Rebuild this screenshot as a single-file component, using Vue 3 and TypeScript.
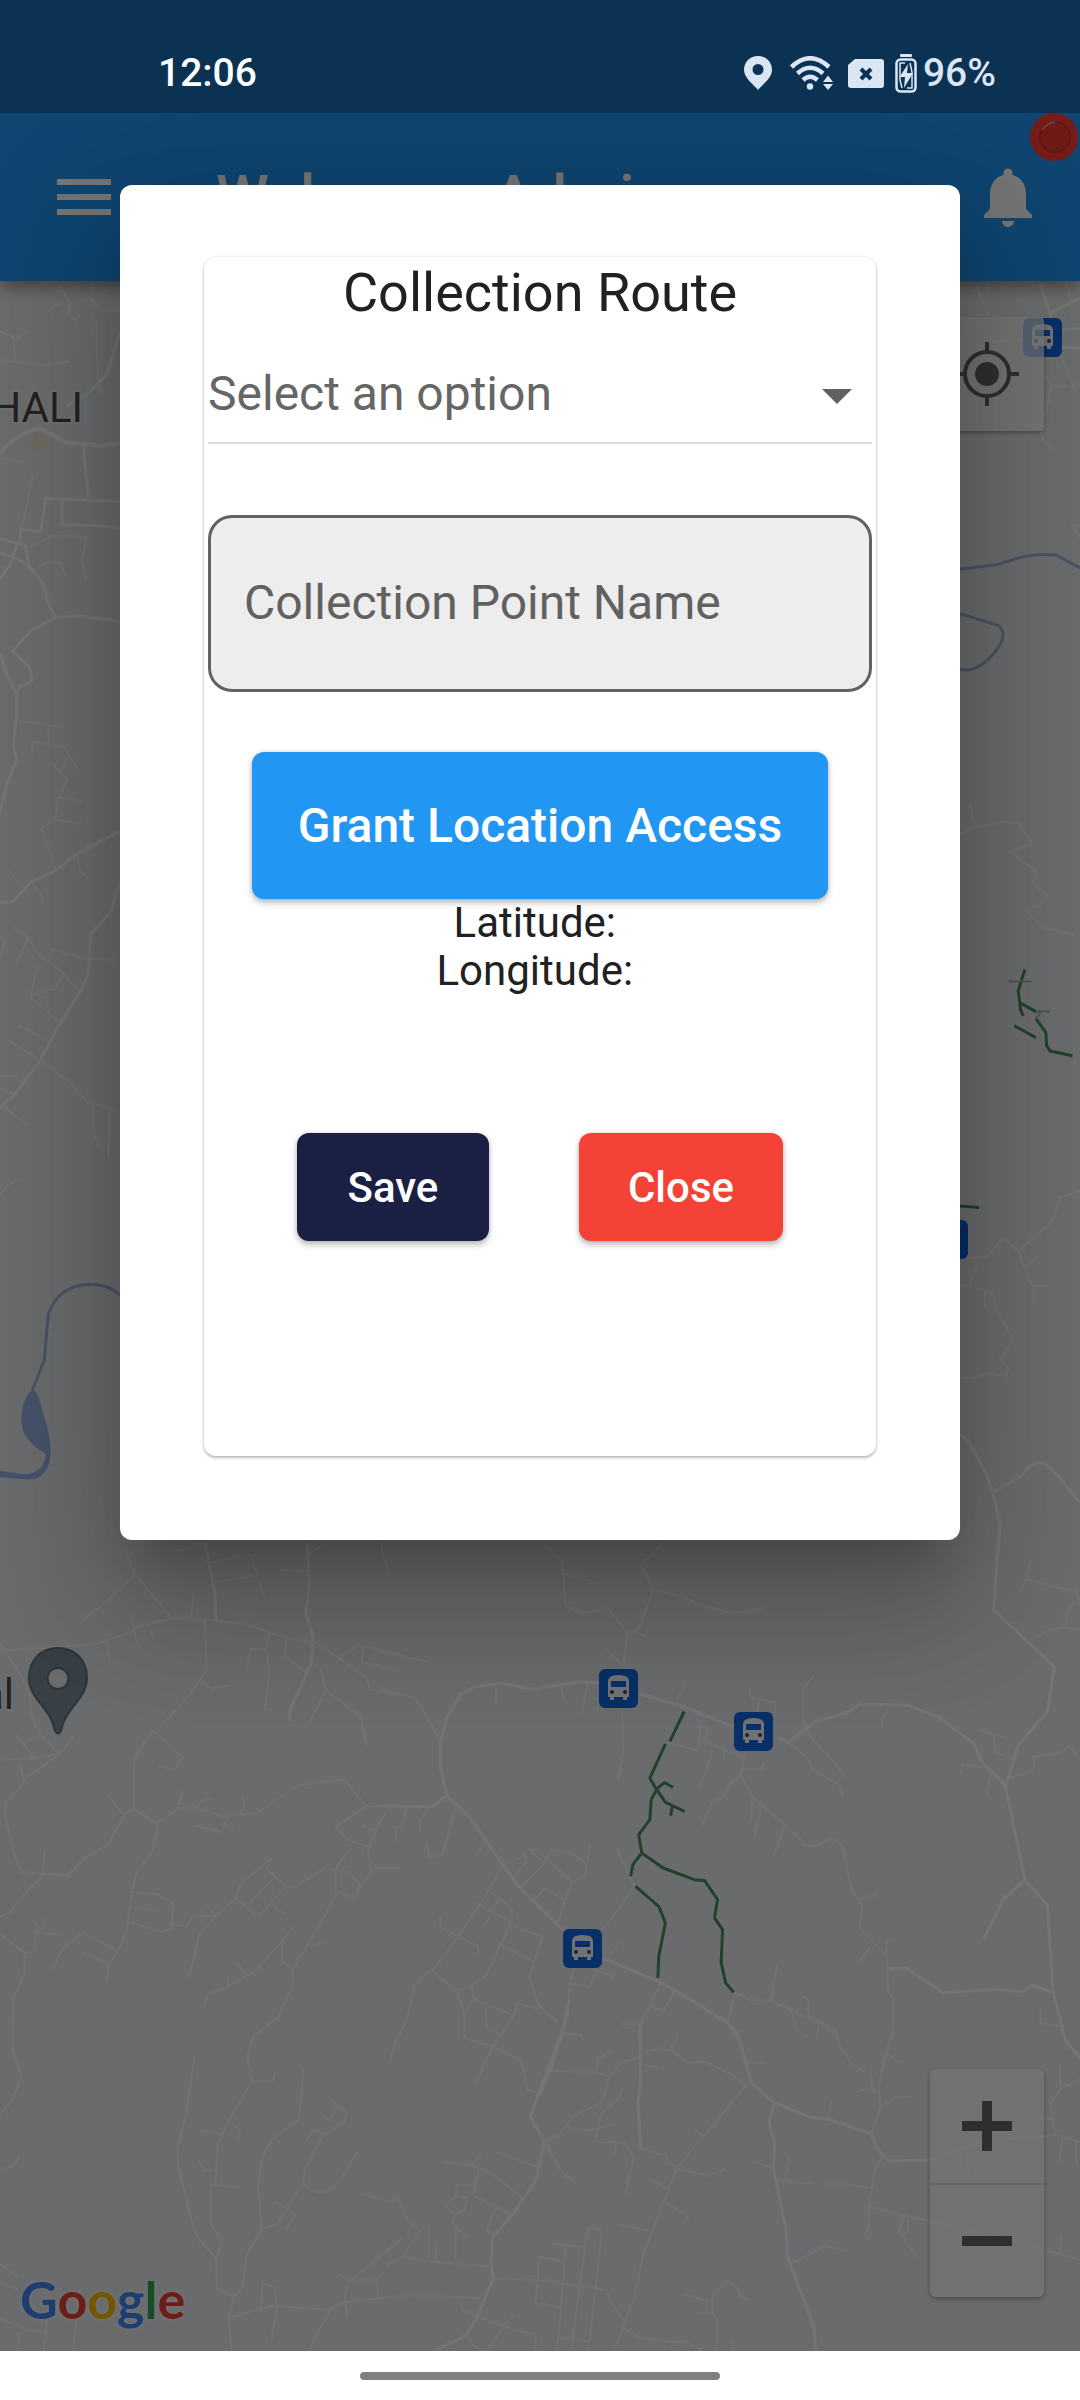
<script setup lang="ts">
import { ref } from 'vue'

interface Tile {
  x: number
  y: number
  sx: number
  sy: number
  roads: string[]
  lanes: string[]
}

const route = ref('')
const pointName = ref('')

const tiles: Tile[] = [
  {
    x: 700, y: 0, sx: 3, sy: 3,
    roads: [
      'M1020 850L1050 940L1140 895M1050 940L1055 960M1085 990L1140 985M1085 1040L1140 1045',
    ],
    lanes: [
      'M830 860L865 940M1100 850L1112 905M780 950L830 945L1020 955M870 1025L970 1020M1080 1060L1125 1170M1100 1160L1055 1155L1035 1250M1035 1130L1060 1155M1020 1295L1030 1320L1050 1335L1050 1350',
    ],
  },
  {
    x: 0, y: 280, sx: 3, sy: 1.742,
    roads: [
      'M0 300Q60 262 120 258L200 282L300 288L360 284',
      'M0 302Q60 264 120 260L200 284L300 290L360 286',
      'M250 290L265 378M60 460L62 434L122 438L138 380L360 386M186 382L186 426L300 428L360 432',
      'M360 595L240 585L165 588L90 612L38 646L90 676L95 700L60 708L50 720L50 760L40 810L50 835L20 880L0 925',
      'M0 450L75 462L90 500L130 530L145 565L165 586M0 475L60 488L100 505',
      'M360 960L230 1000L165 1030L95 1048L40 1082L0 1085',
      'M360 1048L332 1100L272 1140L265 1210L240 1240L170 1305L120 1360L45 1418L0 1442',
      'M360 90L320 165L260 200L200 220M55 455L30 495L0 520M0 650L20 686L50 722',
    ],
    lanes: [
      'M98 340L70 420L55 455M80 468L160 445L260 448L245 490L260 525M115 500L150 490L180 492L198 515',
      'M50 766L192 780M146 780L146 805M95 828L95 805L190 812L232 850M210 828L182 855M158 842L200 870L175 905L165 940L125 955L168 1030M180 902L248 908M165 940L200 943L247 947',
      'M25 1028L70 1058M95 1048L128 1075L122 1085M230 1000L240 1030L262 1040',
      'M40 1127L85 1145L115 1175L175 1200L240 1240M145 1185L158 1165L250 1182L360 1184M85 1145L48 1192M112 1195L92 1245L165 1235L185 1212M92 1250L175 1292M18 1150L0 1180',
      'M55 1298L145 1325M20 1322L120 1360L205 1395L260 1430L360 1450M280 1435L280 1480L300 1515M328 1450L325 1530M0 1385L45 1388L68 1400M0 1408L45 1420M10 1440L80 1472',
      'M0 90L40 100L45 140M45 105L80 90M0 140L130 148L210 142M180 10L210 40L205 60L225 70L240 60M150 50L190 40M290 70L290 130L300 200M265 30L300 50L360 55M0 310L70 318',
    ],
  },
  {
    x: 950, y: 450, sx: 3, sy: 1.425,
    roads: [
      'M30 1402L60 1415L110 1460L128 1485L150 1530L145 1568M128 1485L215 1462Q260 1425 320 1460L390 1500',
    ],
    lanes: [
      'M30 548L75 537L165 530L205 532L245 560L180 572L262 602L250 618L292 635L270 648L225 655L280 680L372 691M60 505L72 535',
      'M390 1055L330 1065L305 1100L205 1142L160 1122L110 1150L40 1152M205 1142L245 1190L292 1192M250 1190L250 1215M225 1165L268 1148',
      'M30 1190L55 1190L85 1160M55 1190L130 1202L140 1225L190 1268L150 1295L178 1310L165 1320L110 1315L75 1322L30 1322M105 1200L105 1220M390 125L365 105L390 110',
    ],
  },
  {
    x: 0, y: 1180, sx: 3, sy: 2.613,
    roads: [
      'M615 950L645 1080L648 1155M922 950L928 1060L918 1135L938 1190L935 1260L870 1385L868 1415',
    ],
    lanes: [
      'M0 40Q20 5 60 0M375 970L405 1030L510 1140M405 1035L300 1115L240 1155M0 1230L290 1212L380 1185L420 1165L520 1145L620 1150L740 1160L850 1195L950 1210L1100 1300L1110 1330L1200 1345',
      'M525 972L600 950M632 1000L720 982M645 1050L765 1035M752 980L795 1095M582 1080L573 1145M840 1020L925 1022M920 980L968 955M1145 950L1150 985L1170 1030',
      'M615 1150L620 1280L570 1345L490 1420M605 1308L635 1330L682 1320M392 1140L415 1220M445 1160L462 1200M318 1205L332 1255M808 1182L798 1230L808 1280L795 1385L815 1387M738 1282L755 1225L798 1227M860 1190L855 1245L925 1292M940 1262L962 1280L978 1335L930 1415M978 1335L1080 1400L1100 1478M1020 1245L1075 1215L1200 1240M1090 1220L1085 1260L1200 1280M1085 1260L1070 1280',
      'M402 1520L435 1465L460 1440L547 1508L525 1542L475 1530M0 1210L60 1290L90 1350L95 1400L118 1445L180 1500L220 1455M0 1515L100 1510L180 1500M50 1450L100 1510M70 1470L118 1450M60 1520L70 1568L180 1500',
    ],
  },
  {
    x: 380, y: 1540, sx: 2.24, sy: 3,
    roads: [
      'M580 460L680 500L790 560M890 590L915 607L975 545L1050 515L1075 492L1180 495L1250 530L1330 610L1350 670L1400 735L1445 1020L1495 1095L1508 1355L1535 1500',
      'M135 610L150 530L180 465L210 440L275 430L340 448L450 425L490 428',
      'M135 600L135 680L150 768L200 830L275 975L315 1045L410 1170M500 1255L625 1325L660 1350L780 1450L805 1500M0 797L115 800L150 768',
      'M1385 0L1375 210L1510 380L1495 515L1430 615L1402 735M1445 1020L1395 1080L1352 1200',
      'M1140 1285L1180 1285L1262 1358L1380 1348L1440 1355L1460 1335L1508 1358',
    ],
    lanes: [
      'M635 10L585 75L612 150L580 265L555 280L545 380M612 150L680 170L710 192L790 220L858 205M560 270L598 290M540 370L502 325M370 20L410 70L415 195L450 220L510 205L555 280M415 100L490 130',
      'M542 510L545 640L532 722M0 335L108 365M0 385L48 388M0 445L80 475L130 590M260 440L260 490M405 435L410 480M465 430L452 525M490 490L485 515',
      'M682 430L665 490M828 445L830 470L885 488L885 520M850 480L845 515M972 405L948 445L948 545L965 590L1020 670L1042 712M915 607L955 650L970 690L1030 735L1038 775',
      'M720 540L712 630L645 610M712 560L735 565L728 605L815 655M745 630L740 655L715 745M770 630L770 655M818 640L808 705L835 770L945 900L950 917L980 917L1015 893L1035 915L1055 1040L1080 1100L1075 1165L1135 1250L1138 1350L1150 1380L1148 1500M808 705L785 730L768 772L745 785L720 858M815 688L855 688L860 668M835 770L830 845M855 795L838 898M908 850L882 945',
      'M1145 492L1125 535L1125 565M1345 570L1405 595M1375 580L1378 635L1415 655M1300 705L1305 675L1350 682M1368 700L1358 770M1410 715L1465 690L1465 650L1520 640L1545 618L1568 655M1460 300L1490 275L1530 262L1568 268M1535 262L1545 195L1568 190M1455 65L1448 118L1555 155M1448 118L1435 155M1555 130L1568 190',
      'M1075 1075L1115 1065M1072 1268L1098 1220M1133 1250L1135 1200L1155 1200M1480 1405L1480 1450L1530 1460',
      'M275 975L245 1050L175 1190L120 1290M275 975L325 945L330 965L300 1010M315 1040L370 970L335 930L350 928L430 1025L460 1005L470 915M430 1025L415 1080L370 1045L345 1080M415 1080L400 1145M370 965L385 930L430 940L465 975',
      'M240 1050L295 1105L295 1145L215 1090M235 1155L265 1080M295 1145L270 1215L235 1310L200 1340M285 1150L365 1190L345 1265L270 1215M345 1265L335 1310L355 1395L400 1450M135 1130L135 1160L220 1220L220 1245M115 1290L170 1355L190 1415L210 1380L205 1340L170 1355',
      'M530 925L570 1040L510 1150L495 1168M435 1285L425 1330L420 1440L400 1500M425 1330L470 1340L485 1290L520 1310L530 1290M515 1240L540 1205M630 1325L585 1450L583 1500M660 1350L635 1412L605 1400M540 1452L585 1453',
      'M795 1358L830 1380L875 1382L985 1450L1025 1490M890 1275L875 1380M795 1358L780 1445M945 1368L960 1380L960 1425',
      'M60 800L50 860L35 862L35 905M110 800L90 840L90 875M172 795L140 945L110 950L105 905M240 900L215 945',
    ],
  },
  {
    x: 0, y: 1750, sx: 2.8, sy: 2.412,
    roads: [
      'M1568 690L1510 825L1485 885L1525 945L1500 1040L1435 1120L1380 1175L1375 1240L1382 1275L1335 1370L1305 1412L1215 1450M1525 945L1568 1010',
    ],
    lanes: [
      'M15 130L75 70M15 130L15 160L40 250L60 295L190 302L235 262L300 230L350 155L375 142L440 178L440 205L425 245L380 300L365 370L355 440L330 485L305 515L300 560M0 402L30 390L75 340L125 298M125 240L120 295M375 142L375 20L390 0M300 105L345 155',
      'M440 178L500 140L550 140L625 160L720 152L835 85L965 72L1025 135L1064 135M500 135L512 98M550 138L565 122L590 118M680 110L685 130L672 158M545 182L620 198L640 160M638 180L655 195',
      'M365 342L440 348L485 370L480 430L455 440L365 415M370 378L435 387M480 420L520 425L540 400L605 400M570 370L605 400L660 358L675 320L760 262M605 400L560 440L535 530L520 550M745 285L800 330L825 330L910 285L975 295L1010 325L990 360L945 340L910 400L820 530L820 570L790 620L780 645L710 690L693 740L705 800L640 895L610 950L603 1045',
      'M660 358L700 385L720 405L800 330M695 375L765 310M765 375L797 397M940 340L940 285L975 245M705 800L765 798L770 780M820 530L790 510L790 460L720 530L640 570L580 590L570 620M790 460L825 425M870 475L905 462M660 510L690 540M635 545L640 568',
      'M545 740L520 880L497 960L500 1010L545 1160L560 1185L605 1225L608 1300L655 1318M670 1055L590 1048L590 1140L622 1190L605 1225M555 990L575 1015L603 1015M560 918L618 925M640 898L672 915L665 945',
      'M850 765L838 890L760 940L735 980L723 1050L733 1155L690 1220L678 1300L655 1318L640 1370L648 1450M733 1155L775 1145L848 1045L855 1010L900 935L965 895L970 875L920 840M848 1045Q900 1090 950 1040L1000 970M855 943L880 915L905 925M898 878L925 895L940 858M768 1088L825 1120L800 1160',
      'M640 1370L760 1340L920 1350L960 1332L1140 1315L1345 1322M930 1345L885 1410L865 1450M735 1280L730 1355M735 1285L770 1295L775 1345L760 1425',
      'M0 445L70 490L68 540L37 600L35 720L60 790L30 850L0 880M145 530L175 480L230 440L330 485M230 487L305 515M70 490L98 485L100 440L165 445M95 415L115 435L130 405M0 1010Q50 1010 52 980',
      'M1010 1068L1090 1090L1115 1080L1140 1135L1175 1160L1130 1220M1085 1242L1130 1222L1210 1235L1375 1245M985 1278L1125 1178M950 1262L975 1280L1055 1278L1060 1325M975 1280L965 1320L973 1368M1055 1278L1070 1262M1200 1145L1200 1225M1225 1190L1218 1228M1275 1230L1275 1150L1308 1175',
      'M1245 995L1320 1002L1365 1015L1420 1050L1465 1080M1320 1002L1350 972M1340 1015L1325 1075L1430 1120M1325 1050L1280 1050L1275 1078L1245 1100L1275 1120L1300 1110L1308 1080L1275 1075M1390 1105L1362 1158L1385 1172M1390 970L1505 1005M1275 1120L1268 1140L1285 1160',
      'M1525 945L1568 930M1382 1275L1568 1280M1510 1222L1500 1335L1568 1345M1510 1222L1568 1230M1290 1322L1295 1350L1410 1390L1500 1412L1500 1450M1305 1412L1330 1440L1365 1450L1410 1390L1440 1362',
      'M1025 135L940 185L970 215L1035 235M1055 195L1030 240L1040 300L1010 325M1015 180L1050 195L1080 150M1040 285L1120 285',
      'M1300 630L1300 695L1380 715L1330 805M1380 715L1440 640M1325 600L1435 640M1360 620L1362 670L1410 690M1440 640L1450 612L1510 625M1380 715L1460 750L1478 820L1508 828M1205 530L1160 570L1140 650L1110 700L1090 755',
      'M0 1240L50 1270M0 1285L50 1300M0 1370L80 1400L130 1405L130 1375M55 1405L50 1450M215 1370L205 1450M130 1405L122 1450',
    ],
  },
  {
    x: 540, y: 1980, sx: 2.904, sy: 3,
    roads: [
      'M545 130L575 160L600 260L615 310L680 368L785 412L840 418L963 462L975 495L995 527L1015 543L1130 540',
      'M680 370L665 430L682 490L678 560L695 655L715 750L718 830L730 860L770 970L795 1040L802 1115',
      'M290 130L292 300L285 370L292 505M85 60L65 155L30 270L0 345M1525 180L1568 235',
    ],
    lanes: [
      'M65 160L120 165L125 182M30 272L160 277L200 290L190 330L175 370L95 410L60 460L15 487L0 560M0 465L15 487L70 585L103 603M165 275L168 235L208 213M200 290L240 245L290 233',
      'M300 218L345 205L380 212L430 248L480 245L560 285L598 318L400 560L300 820L275 950L215 1110M375 212L402 165M300 255L345 263M240 320L230 355L175 405L160 485L245 488L272 532L248 645M80 445L155 450L210 432M220 490L218 515L208 525',
      'M290 505L365 527L372 548L400 565L490 588L537 567M318 598L370 625M357 665L425 705L430 725M232 732L315 753M445 445L475 470',
      'M600 248L650 248M840 415L845 362M617 543L678 565M725 530L712 600M690 598L740 610L790 610M827 612L890 612L960 625M728 850L770 830L830 797L885 812',
      'M1028 140L1005 220L983 320L988 380L963 462M1005 222L1048 248M985 378L1035 352L1080 350M915 338L960 322L975 340M960 280L965 320M995 530L972 570L955 680L955 735L945 765L960 782M960 680L1060 708L1130 722L1400 790L1568 840M1055 710L1042 755L1065 790L1095 832M1070 715L1068 755L1050 765',
      'M730 85L740 145L778 172M780 105L860 152L870 200L910 255L945 275M810 130L803 178',
      'M420 943L497 965M455 1000L500 1000L515 1020L515 1115M500 1000L500 945L545 902L575 925L580 945L600 960M560 1075L562 1115',
      'M0 900L195 930L205 970L245 1020M240 1045L290 1072L385 1087L420 1085L470 1110M385 1087L382 1115M35 793L125 800M75 805L50 1115M138 742L180 750L140 1115M138 742L90 1115M0 830L75 848M0 970L55 980M55 1072L140 1083',
      'M1508 252L1512 325L1568 298M1512 325L1482 370L1497 465L1568 485M1130 540L1300 480L1500 465M1465 415L1490 418M1518 470L1508 550M1558 480L1558 555M1513 770L1510 820M1240 510L1245 600M1305 480L1305 600',
    ],
  },
]

const busStops: [number, number][] = [
  [1023, 318],
  [929, 1220],
  [599, 1669],
  [734, 1712],
  [563, 1929],
]

const logo: [string, string][] = [
  ['G', '#4285f4'],
  ['o', '#ea4335'],
  ['o', '#fbbc05'],
  ['g', '#4285f4'],
  ['l', '#34a853'],
  ['e', '#ea4335'],
]

const tileTransform = (t: Tile) => `translate(${t.x} ${t.y}) scale(${1 / t.sx} ${1 / t.sy})`
</script>

<template>
  <div class="phone">
    <div class="status">
      <span class="clock">12:06</span>
      <div class="status-icons">
        <svg class="pin-icon" viewBox="0 0 28 34" width="28" height="34">
          <path fill-rule="evenodd" d="M14 0C6 0 0 6 0 14C0 22 10 29 14 34C18 29 28 22 28 14C28 6 22 0 14 0ZM14 8A5.500 5.500 0 1 1 14 19A5.500 5.500 0 1 1 14 8Z" />
        </svg>
        <svg class="wifi-icon" viewBox="0 0 44 34" width="44" height="34">
          <g fill="none" stroke="currentColor" stroke-width="4.500">
            <path d="M1.500 11Q20 -6.500 39 11" />
            <path d="M7.500 17.500Q20 6 33 17.500" />
            <path d="M13 24Q20 17.500 27.500 24" />
          </g>
          <circle cx="20" cy="30.500" r="3.200" />
          <path d="M38 19.500L43 26H33ZM33 28H43L38 34Z" />
        </svg>
        <svg class="sim-icon" viewBox="0 0 36 29" width="36" height="29">
          <path d="M7 0H33Q36 0 36 3V26Q36 29 33 29H3Q0 29 0 26V6Z" />
          <path class="cut" d="M13 10L23 20M23 10L13 20" />
        </svg>
        <svg class="battery-icon" viewBox="0 0 22 39" width="22" height="39">
          <rect x="5" y="0" width="12" height="3" rx="1" />
          <g fill="none" stroke="currentColor">
            <rect x="1.500" y="5.500" width="19" height="32" rx="4" stroke-width="2.500" />
            <path d="M10 9H5V26L7 34M12 34H17V18L15 9" stroke-width="1.500" />
          </g>
          <path d="M13 10L4.500 23H10L9 34L18 19H12Z" />
        </svg>
        <span class="percent">96%</span>
      </div>
    </div>

    <div class="stage">
      <header class="app-bar">
        <button class="icon-button" type="button" aria-label="Menu">
          <svg viewBox="0 0 24 24" width="72" height="72"><path d="M3 18h18v-2H3v2zm0-5h18v-2H3v2zm0-7v2h18V6H3z" /></svg>
        </button>
        <h1 class="app-title">Welcome, Admin</h1>
        <button class="icon-button" type="button" aria-label="Notifications">
          <svg viewBox="0 0 24 24" width="72" height="72"><path d="M12 22c1.100 0 2-.9 2-2h-4c0 1.100.9 2 2 2zm6-6v-5c0-3.070-1.640-5.640-4.500-6.320V4c0-.83-.67-1.500-1.500-1.500s-1.500.67-1.500 1.500v.68C7.630 5.360 6 7.920 6 11v5l-2 2v1h16v-1l-2-2z" /></svg>
          <svg class="badge" viewBox="0 0 48 48" width="48" height="48">
            <circle cx="24" cy="24" r="24" fill="#ff3d30" />
            <circle cx="25" cy="24" r="15" fill="#f03a33" stroke="#d32f2f" stroke-width="2" />
            <path d="M12 17Q17 10 25 9" fill="none" stroke="#ff8a80" stroke-width="2" />
          </svg>
        </button>
      </header>

      <main class="map">
        <svg class="map-art" viewBox="0 281 1080 2070" preserveAspectRatio="xMidYMid slice" aria-hidden="true">
          <g v-for="(t, i) in tiles" :key="i" :transform="tileTransform(t)">
            <path v-for="d in t.lanes" :key="d" class="lane" :d="d" />
            <path v-for="d in t.roads" :key="d" class="road" :d="d" />
          </g>
          <g transform="translate(0 1180) scale(0.333 0.383)">
            <path class="river" d="M97 550L133 470L145 350Q175 275 270 272Q325 272 360 300" />
            <path class="lake" d="M97 550Q112 550 118 575L142 645Q156 690 150 735Q135 780 90 782L0 776V760L70 768Q132 768 138 716Q70 680 65 640Q60 600 78 570Q88 550 97 550Z" />
          </g>
          <g transform="translate(950 450) scale(0.333 0.702)">
            <path class="river" d="M30 170L145 163Q245 145 320 150L390 168M30 233L145 250Q175 262 140 285Q80 320 30 312" />
            <path class="trail" d="M225 740L205 770L212 798L220 806M212 788L258 800M258 810L288 830L290 848L300 856L368 863M193 820L258 837M30 1077L88 1079" />
            <path class="trail faint" d="M178 757H245M258 800H300M275 800L258 810" />
          </g>
          <g transform="translate(380 1540) scale(0.446 0.333)">
            <path class="trail" d="M682 515L650 605M640 612L605 715L620 750L608 780L605 840L580 885L587 940L567 975L562 1010M573 1040L625 1100L640 1150L625 1250L623 1315M587 940L635 985L705 1020L728 1023L757 1080L750 1135L768 1170L765 1270L775 1330L793 1358M620 748L638 728L657 743M620 748L640 788L683 815M655 800L652 828" />
          </g>
          <ellipse cx="38" cy="442" rx="10" ry="9" fill="#efe6d2" />
          <g v-for="[x, y] in busStops" :key="y" :transform="`translate(${x} ${y})`">
            <rect width="39" height="39" rx="6" fill="#1268e0" />
            <path fill="#f4f8ff" d="M9 12Q9 6 19.500 6Q30 6 30 12V28H28V31H24V28H15V31H11V28H9Z" />
            <rect x="12" y="12" width="15" height="6" fill="#1268e0" />
            <circle cx="13" cy="23" r="2" fill="#444b5a" />
            <circle cx="26" cy="23" r="2" fill="#444b5a" />
          </g>
          <path fill="#7a8b98" stroke="#65757f" stroke-width="2" fill-rule="evenodd" d="M58 1648C41 1648 29 1660 29 1678C29 1699 51 1708 55 1731Q58 1736 61 1731C65 1708 87 1699 87 1678C87 1660 75 1648 58 1648ZM58 1668A10.500 10.500 0 1 1 58 1689A10.500 10.500 0 1 1 58 1668Z" />
          <text class="place" x="83" y="422" text-anchor="end">HALI</text>
          <text class="place" x="14" y="1709" text-anchor="end">al</text>
        </svg>

        <button class="map-button locate" type="button" aria-label="My location">
          <svg viewBox="0 0 64 64" width="64" height="64">
            <circle cx="32" cy="32" r="22" fill="none" stroke="currentColor" stroke-width="4" />
            <circle cx="32" cy="32" r="12" />
            <path d="M30 0h4v10h-4zM30 54h4v10h-4zM0 30h10v4H0zM54 30h10v4H54z" />
          </svg>
        </button>
        <div class="zoom">
          <button class="map-button" type="button" aria-label="Zoom in">
            <svg viewBox="0 0 50 50" width="50" height="50"><path d="M20 0h10v20h20v10H30v20H20V30H0V20h20z" /></svg>
          </button>
          <button class="map-button" type="button" aria-label="Zoom out">
            <svg viewBox="0 0 50 50" width="50" height="50"><path d="M0 20h50v10H0z" /></svg>
          </button>
        </div>
        <a class="google" href="#" aria-label="Google"><span v-for="([c, color], i) in logo" :key="i" :style="{ color }">{{ c }}</span></a>
      </main>

      <div class="scrim">
        <section class="dialog" role="dialog" aria-modal="true" aria-labelledby="dialog-title">
          <form class="card" @submit.prevent>
            <h2 id="dialog-title" class="title">Collection Route</h2>
            <div class="select-wrap">
              <select v-model="route" class="select" aria-labelledby="dialog-title">
                <option value="">Select an option</option>
              </select>
              <svg class="caret" viewBox="0 0 30 15" width="30" height="15"><path d="M0 0h30L15 15z" /></svg>
            </div>
            <input v-model="pointName" class="field" type="text" placeholder="Collection Point Name" aria-label="Collection Point Name" />
            <button class="btn grant" type="button">Grant Location Access</button>
            <p class="coord">Latitude: </p>
            <p class="coord">Longitude: </p>
            <div class="actions">
              <button class="btn save" type="submit">Save</button>
              <button class="btn close" type="button">Close</button>
            </div>
          </form>
        </section>
      </div>
    </div>

    <div class="nav"><div class="handle"></div></div>
  </div>
</template>

<style>
body {
  margin: 0;
}
</style>

<style scoped>
.phone,
.phone * {
  box-sizing: border-box;
}
.phone {
  display: flex;
  flex-direction: column;
  min-height: 100vh;
  font-family: Roboto, "Liberation Sans", sans-serif;
  background: #fff;
}
svg {
  display: block;
  fill: currentColor;
}
button {
  font-family: inherit;
  border: 0;
  padding: 0;
}
.status {
  display: flex;
  align-items: center;
  justify-content: space-between;
  height: 113px;
  padding: 33px 84px 0 158px;
  background: #0b3252;
  font-size: 39px;
  font-weight: 500;
  line-height: 48px;
}
.clock {
  color: #fff;
}
.status-icons {
  display: flex;
  align-items: center;
  color: #dbe6f5;
}
.wifi-icon {
  margin-left: 18px;
}
.sim-icon {
  margin-left: 14px;
}
.battery-icon {
  margin-left: 11px;
}
.percent {
  margin-left: 6px;
}
.cut {
  fill: none;
  stroke: #0b3252;
  stroke-width: 4;
}
.stage {
  position: relative;
  display: flex;
  flex: 1;
  flex-direction: column;
  overflow: hidden;
}
.app-bar {
  position: relative;
  z-index: 1;
  display: flex;
  align-items: center;
  height: 168px;
  padding: 0 36px 0 48px;
  background: #2196f3;
  box-shadow: 0 6px 15px rgba(0, 0, 0, 0.4);
  color: #fff;
}
.icon-button {
  position: relative;
  background: none;
  color: inherit;
}
.app-title {
  flex: 1;
  margin: 0 0 0 96px;
  font-size: 60px;
  font-weight: 500;
  line-height: 72px;
}
.badge {
  position: absolute;
  top: -48px;
  right: -34px;
}
.map {
  position: relative;
  display: flex;
  flex: 1;
  flex-direction: column;
  align-items: flex-end;
  padding: 36px 36px 54px 20px;
  background: #e8eaed;
}
.map-art {
  position: absolute;
  inset: 0;
  width: 100%;
  height: 100%;
}
.road,
.lane,
.river,
.trail {
  fill: none;
  vector-effect: non-scaling-stroke;
  stroke-linejoin: round;
}
.road {
  stroke: #fdfcfa;
  stroke-width: 3;
}
.lane {
  stroke: #f8f7f6;
  stroke-width: 2;
}
.river {
  stroke: #a3b4da;
  stroke-width: 3;
}
.lake {
  fill: #98b4e8;
}
.trail {
  stroke: #4a8f61;
  stroke-width: 3;
}
.faint {
  stroke: #a5b5aa;
  stroke-width: 2;
}
.place {
  fill: #4a4a4a;
  stroke: #f4f4f4;
  stroke-width: 3;
  paint-order: stroke;
  font-size: 42px;
}
.map-button {
  position: relative;
  display: flex;
  align-items: center;
  justify-content: center;
  width: 114px;
  height: 114px;
  background: rgba(255, 255, 255, 0.7);
  color: #666;
}
.locate {
  border-radius: 4px;
  box-shadow: 0 2px 5px rgba(0, 0, 0, 0.3);
}
.zoom {
  position: relative;
  margin-top: auto;
  border-radius: 6px;
  box-shadow: 0 2px 5px rgba(0, 0, 0, 0.3);
  overflow: hidden;
}
.zoom .map-button + .map-button {
  border-top: 2px solid #ddd;
}
.google {
  position: absolute;
  left: 20px;
  bottom: 20px;
  font-family: Lato, "Open Sans", sans-serif;
  font-size: 52px;
  font-weight: 700;
  line-height: 64px;
  text-decoration: none;
  text-shadow: 0 0 4px #fff;
}
.scrim {
  position: absolute;
  inset: 0;
  z-index: 2;
  display: flex;
  align-items: flex-start;
  justify-content: center;
  padding: 72px 120px;
  background: rgba(0, 0, 0, 0.54);
}
.dialog {
  flex: 1;
  padding: 72px 84px 84px;
  border-radius: 12px;
  background: #fff;
  box-shadow:
    0 33px 45px -21px rgba(0, 0, 0, 0.2),
    0 72px 114px 9px rgba(0, 0, 0, 0.14),
    0 27px 138px 24px rgba(0, 0, 0, 0.12);
}
.card {
  display: flex;
  flex-direction: column;
  align-items: center;
  padding: 4px 4px 215px;
  border-radius: 12px;
  background: #fff;
  box-shadow:
    0 2px 3px rgba(0, 0, 0, 0.25),
    0 0 3px rgba(0, 0, 0, 0.12);
}
.title {
  margin: 0;
  color: #212121;
  font-size: 54px;
  font-weight: 400;
  line-height: 64px;
}
.select-wrap {
  position: relative;
  width: 100%;
  margin-top: 24px;
}
.select {
  display: block;
  width: 100%;
  height: 95px;
  padding: 0 0 4px;
  border: 0;
  border-bottom: 2px solid #dcdcdc;
  border-radius: 0;
  appearance: none;
  background: none;
  color: #666;
  font-family: inherit;
  font-size: 48px;
}
.caret {
  position: absolute;
  top: 40px;
  right: 20px;
  color: #616161;
  pointer-events: none;
}
.field {
  width: 100%;
  height: 177px;
  margin-top: 71px;
  padding: 0 33px 2px;
  border: 3px solid #616161;
  border-radius: 24px;
  background: #ededed;
  color: #212121;
  font-family: inherit;
  font-size: 48px;
}
.field::placeholder {
  color: #616161;
  opacity: 1;
}
.btn {
  border-radius: 12px;
  box-shadow:
    0 4px 6px rgba(0, 0, 0, 0.24),
    0 0 4px rgba(0, 0, 0, 0.14);
  color: #fff;
  font-size: 42px;
  font-weight: 500;
}
.grant {
  height: 147px;
  margin-top: 60px;
  padding: 0 46px;
  background: #2196f3;
  font-size: 48px;
}
.coord {
  margin: 0;
  color: #212121;
  font-size: 42px;
  line-height: 48px;
  white-space: pre;
}
.actions {
  display: flex;
  gap: 90px;
  margin-top: 138px;
}
.actions .btn {
  min-width: 192px;
  height: 108px;
  padding: 0 49px;
}
.save {
  background: #1a2044;
}
.close {
  background: #f44336;
}
.nav {
  display: flex;
  align-items: center;
  justify-content: center;
  height: 49px;
  background: #fff;
}
.handle {
  width: 360px;
  height: 8px;
  border-radius: 4px;
  background: #808080;
}
</style>
